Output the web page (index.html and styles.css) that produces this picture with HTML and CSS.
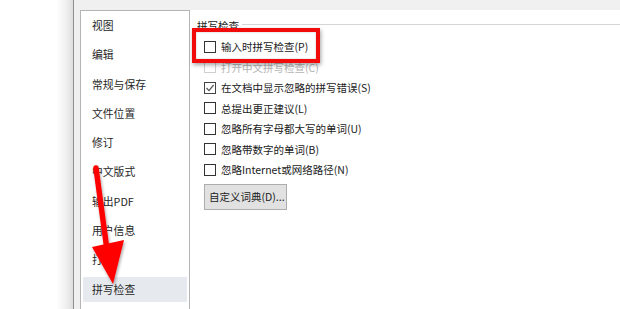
FILE: index.html
```html
<!DOCTYPE html>
<html lang="zh-CN">
<head>
<meta charset="utf-8">
<title>选项 - 拼写检查</title>
<link rel="stylesheet" href="styles.css">
</head>
<body>
<div class="stage">
  <div class="desk"></div>
  <div class="dialog">
    <div class="body">
      <ul class="nav">
        <li class="nav-item">视图</li>
        <li class="nav-item">编辑</li>
        <li class="nav-item">常规与保存</li>
        <li class="nav-item">文件位置</li>
        <li class="nav-item">修订</li>
        <li class="nav-item">中文版式</li>
        <li class="nav-item">输出PDF</li>
        <li class="nav-item">用户信息</li>
        <li class="nav-item">打印</li>
        <li class="nav-item selected">拼写检查</li>
      </ul>
      <div class="panel">
        <div class="legend"><span class="legend-text">拼写检查</span></div>
        <div class="options">
          <label class="row"><span class="box"></span>输入时拼写检查(P)</label>
          <label class="row disabled"><span class="box"></span>打开中文拼写检查(C)</label>
          <label class="row"><span class="box checked"><svg viewBox="0 0 12 12" width="12" height="12"><polyline points="2.5,6 5,8.6 9.6,3" fill="none" stroke="#555" stroke-width="1.2"/></svg></span>在文档中显示忽略的拼写错误(S)</label>
          <label class="row"><span class="box"></span>总提出更正建议(L)</label>
          <label class="row"><span class="box"></span>忽略所有字母都大写的单词(U)</label>
          <label class="row"><span class="box"></span>忽略带数字的单词(B)</label>
          <label class="row"><span class="box"></span>忽略Internet或网络路径(N)</label>
        </div>
        <button class="btn">自定义词典(D)...</button>
      </div>
    </div>
  </div>
  <div class="callout"></div>
  <svg class="arrow" width="620" height="309" viewBox="0 0 620 309">
    <defs>
      <filter id="sh" x="-20%" y="-20%" width="140%" height="140%">
        <feDropShadow dx="1" dy="2" stdDeviation="1.5" flood-color="#000" flood-opacity="0.35"/>
      </filter>
    </defs>
    <g filter="url(#sh)" fill="#f00">
      <line x1="96" y1="168" x2="107" y2="250" stroke="#f00" stroke-width="5.5" stroke-linecap="round"/>
      <polygon points="92,247 124,240 113,284"/>
    </g>
  </svg>
</div>
</body>
</html>
```

FILE: styles.css
```css
* { box-sizing: border-box; }
html, body { margin: 0; padding: 0; }
body {
  width: 620px;
  height: 309px;
  overflow: hidden;
  background: #fff;
  font-family: "Noto Sans CJK SC", "Microsoft YaHei", "Noto Sans", sans-serif;
  font-size: 10.5px;
  color: #1a1a1a;
}
.stage {
  position: relative;
  display: flex;
  width: 620px;
  height: 309px;
}
.desk {
  width: 73px;
  flex: none;
  background: linear-gradient(to right, #fff 0, #fff 56px, #f0f0f0 66px, #dedede 73px);
}
.dialog {
  flex: 1;
  border-left: 1px solid #8f8f8f;
  background: #f0f0f0;
  padding-top: 10px;
  display: flex;
  flex-direction: column;
}
.body {
  flex: 1;
  display: flex;
  padding-left: 6px;
}
.nav {
  list-style: none;
  margin: 0;
  width: 110px;
  flex: none;
  background: #fff;
  border: 1px solid #b4b4b4;
  border-bottom: none;
  padding: 2px 2px 0;
  display: flex;
  flex-direction: column;
  gap: 4px;
}
.nav-item {
  height: 25.3px;
  line-height: 25.3px;
  padding-left: 9px;
  color: #262626;
  font-size: 10.8px;
  white-space: nowrap;
}
.nav-item.selected {
  background: #e6eaef;
}
.panel {
  flex: 1;
  background: #fff;
  padding-left: 14px;
}
.legend {
  display: flex;
  align-items: flex-start;
  height: 20px;
  margin-left: -7px;
}
.legend-text {
  display: block;
  line-height: 14px;
  height: 14px;
  margin-top: 9px;
  padding-right: 3px;
  color: #1a1a1a;
}
.legend::after {
  content: "";
  flex: 1;
  height: 2px;
  margin-top: 14px;
  border-top: 1px solid #d5d5d5;
  border-bottom: 1px solid #fff;
}
.options {
  margin-top: 6.25px;
  display: flex;
  flex-direction: column;
}
.row {
  height: 20.5px;
  display: flex;
  align-items: center;
  gap: 5px;
  white-space: nowrap;
  color: #1a1a1a;
}
.box {
  width: 12px;
  height: 12px;
  flex: none;
  border: 1px solid #333;
  background: #fff;
  display: flex;
  align-items: center;
  justify-content: center;
}
.box svg { display: block; margin: -1px; }
.box.checked { border-color: #444; }
.row.disabled { color: #b4b4b4; }
.row.disabled .box { border-color: #cfcfcf; }
.btn {
  margin-top: 4px;
  width: 83px;
  height: 26px;
  padding: 0 0 0 4px;
  text-align: left;
  font: inherit;
  color: #1a1a1a;
  background: #e1e1e1;
  border: 1px solid #adadad;
  border-radius: 0;
  white-space: nowrap;
}
.callout {
  position: absolute;
  left: 192px;
  top: 28px;
  width: 128px;
  height: 35px;
  border: 4px solid #f30b0b;
  box-shadow: 1px 2px 4px rgba(0,0,0,0.35), inset 0 0 2px rgba(0,0,0,0.25);
}
.arrow {
  position: absolute;
  left: 0;
  top: 0;
  pointer-events: none;
}
```
